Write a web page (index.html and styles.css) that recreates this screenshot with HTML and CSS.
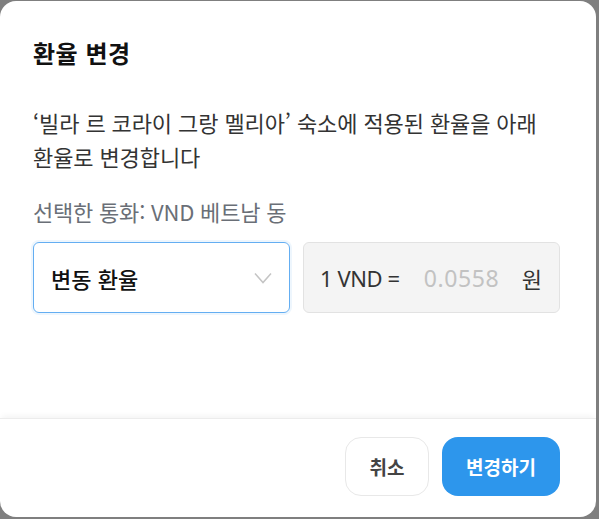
FILE: index.html
```html
<!DOCTYPE html>
<html lang="ko">
<head>
<meta charset="utf-8">
<link rel="stylesheet" href="styles.css">
</head>
<body>
<div class="modal">
  <div class="body">
    <h1 class="title">환율 변경</h1>
    <p class="desc">‘빌라 르 코라이 그랑 멜리아’ 숙소에 적용된 환율을 아래<br>환율로 변경합니다</p>
    <div class="label">선택한 통화: VND 베트남 동</div>
    <div class="fields">
      <div class="select">
        <span class="select-text">변동 환율</span>
        <svg class="chev" width="18" height="12" viewBox="0 0 18 12"><path d="M1 1.5 L9 10.5 L17 1.5" fill="none" stroke="#c4c4c4" stroke-width="1.5"/></svg>
      </div>
      <div class="rate">
        <span class="rate-unit">1 VND =</span>
        <span class="rate-value">0.0558</span>
        <span class="rate-won">원</span>
      </div>
    </div>
  </div>
  <div class="footer">
    <button class="btn btn-cancel">취소</button>
    <button class="btn btn-primary">변경하기</button>
  </div>
</div>
</body>
</html>
```

FILE: styles.css
```css
html, body {
  margin: 0;
  padding: 0;
  background: #7f7f7f;
  width: 599px;
  height: 519px;
  overflow: hidden;
}
body {
  font-family: "Noto Sans CJK KR", "Noto Sans", sans-serif;
  padding-top: 1px;
  box-sizing: border-box;
}
.modal {
  width: 596px;
  height: 516px;
  background: #fff;
  border-radius: 16px;
  display: flex;
  flex-direction: column;
  overflow: hidden;
}
.body {
  flex: 1;
  padding: 32px 30px 0 33px;
}
.title {
  margin: 0;
  font-size: 24px;
  font-weight: 700;
  line-height: 40px;
  color: #111;
  letter-spacing: 0.5px;
}
.desc {
  margin: 32px 0 0;
  font-size: 22px;
  line-height: 34px;
  color: #333;
  letter-spacing: -0.1px;
}
.label {
  margin-top: 24px;
  font-size: 22px;
  line-height: 28px;
  color: #6a6f77;
  letter-spacing: -0.2px;
}
.fields {
  margin-top: 17px;
  display: flex;
  gap: 13px;
}
.select {
  width: 257px;
  height: 71px;
  box-sizing: border-box;
  border: 1px solid #64aef2;
  border-radius: 6px;
  box-shadow: 0 0 0 2px #eef6fd;
  display: flex;
  align-items: center;
  justify-content: space-between;
  padding: 0 17px 0 17px;
}
.select-text {
  font-size: 22px;
  font-weight: 500;
  color: #111;
}
.rate {
  width: 257px;
  height: 71px;
  box-sizing: border-box;
  background: #f4f4f4;
  border: 1px solid #e2e2e2;
  border-radius: 6px;
  display: flex;
  align-items: center;
  padding: 0 16px;
  font-size: 22px;
  color: #333;
}
.rate-unit {
  font-family: "Noto Sans", sans-serif;
  letter-spacing: -0.4px;
}
.rate-value {
  font-family: "Noto Sans", sans-serif;
  font-size: 23px;
  color: #c2c2c2;
  margin-left: 24px;
  letter-spacing: 0.6px;
}
.rate-won {
  margin-left: auto;
  margin-right: 1px;
}
.footer {
  height: 99px;
  box-sizing: border-box;
  border-top: 1px solid #ececec;
  box-shadow: 0 -4px 6px -2px rgba(0,0,0,0.05);
  display: flex;
  justify-content: flex-end;
  align-items: center;
  gap: 13px;
  padding: 0 36px 4px 0;
}
.btn {
  font-family: "Noto Sans CJK KR", sans-serif;
  font-size: 19px;
  font-weight: 700;
  height: 59px;
  border-radius: 16px;
  cursor: pointer;
}
.btn-cancel {
  width: 84px;
  background: #fff;
  border: 1px solid #e8e8e8;
  color: #444;
}
.btn-primary {
  width: 118px;
  background: #2d96ec;
  border: none;
  color: #fff;
}
```
